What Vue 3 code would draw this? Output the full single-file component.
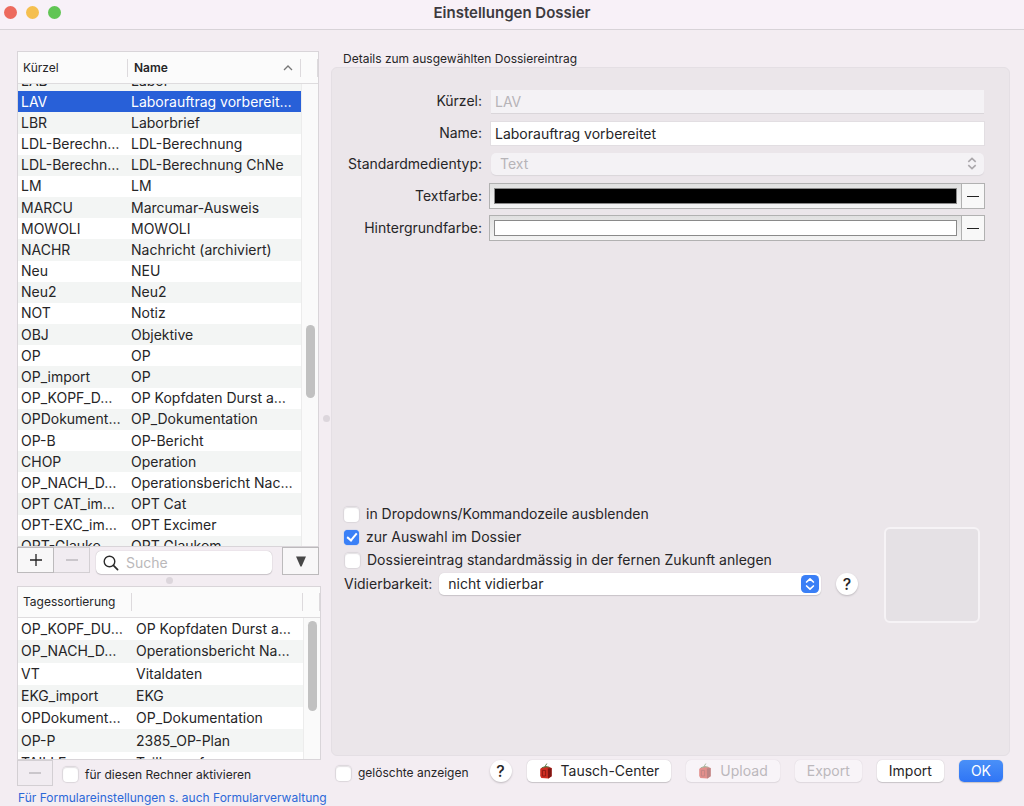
<script setup>
import { ref } from 'vue'

const entries = [
  ['LAB', 'Labor'],
  ['LAV', 'Laborauftrag vorbereit…'],
  ['LBR', 'Laborbrief'],
  ['LDL-Berechn…', 'LDL-Berechnung'],
  ['LDL-Berechn…', 'LDL-Berechnung ChNe'],
  ['LM', 'LM'],
  ['MARCU', 'Marcumar-Ausweis'],
  ['MOWOLI', 'MOWOLI'],
  ['NACHR', 'Nachricht (archiviert)'],
  ['Neu', 'NEU'],
  ['Neu2', 'Neu2'],
  ['NOT', 'Notiz'],
  ['OBJ', 'Objektive'],
  ['OP', 'OP'],
  ['OP_import', 'OP'],
  ['OP_KOPF_D…', 'OP Kopfdaten Durst a…'],
  ['OPDokument…', 'OP_Dokumentation'],
  ['OP-B', 'OP-Bericht'],
  ['CHOP', 'Operation'],
  ['OP_NACH_D…', 'Operationsbericht Nac…'],
  ['OPT CAT_im…', 'OPT Cat'],
  ['OPT-EXC_im…', 'OPT Excimer'],
  ['OPT-Glauko…', 'OPT Glaukom']
]

const dayOrder = [
  ['OP_KOPF_DU…', 'OP Kopfdaten Durst a…'],
  ['OP_NACH_D…', 'Operationsbericht Na…'],
  ['VT', 'Vitaldaten'],
  ['EKG_import', 'EKG'],
  ['OPDokument…', 'OP_Dokumentation'],
  ['OP-P', '2385_OP-Plan'],
  ['TAILLE', 'Taillenumfang']
]

const selected = ref(1)
const name = ref('Laborauftrag vorbereitet')
const search = ref('')
const hidden = ref(false)
const selectable = ref(true)
const future = ref(false)
const activeHere = ref(false)
const showDeleted = ref(false)
</script>

<template>
  <div class="window">
    <header class="titlebar">
      <div class="lights"><i class="red"></i><i class="yellow"></i><i class="green"></i></div>
      <h1>Einstellungen Dossier</h1>
    </header>

    <main class="body">
      <section class="left">
        <div class="list list-main">
          <div class="head">
            <span class="h-code">Kürzel</span>
            <span class="h-name bold">Name
              <svg width="10" height="6" viewBox="0 0 10 6"><path d="M1 5 L5 1 L9 5" fill="none" stroke="#777" stroke-width="1.3" /></svg>
            </span>
            <span class="h-end"></span>
          </div>
          <div class="view">
            <div class="clip">
              <table class="rows scrolled">
                <tbody>
                  <tr v-for="(e, i) in entries" :key="i" :class="{ sel: i === selected }" @click="selected = i">
                    <td class="c-code">{{ e[0] }}</td>
                    <td>{{ e[1] }}</td>
                  </tr>
                </tbody>
              </table>
            </div>
            <div class="track"><div class="thumb thumb-main"></div></div>
          </div>
        </div>

        <div class="tools">
          <button class="sq" aria-label="Hinzufügen">
            <svg width="14" height="14" viewBox="0 0 14 14"><path d="M7 1V13M1 7H13" stroke="#222" stroke-width="1.3" /></svg>
          </button>
          <button class="sq off" aria-label="Entfernen" disabled>
            <svg width="14" height="14" viewBox="0 0 14 14"><path d="M1 7H13" stroke="#b9b6ba" stroke-width="1.4" /></svg>
          </button>
          <label class="search">
            <svg width="16" height="16" viewBox="0 0 16 16"><circle cx="6.5" cy="6.5" r="5.3" fill="none" stroke="#2b2b2b" stroke-width="1.4" /><path d="M10.4 10.4 L14.6 14.6" stroke="#2b2b2b" stroke-width="1.7" stroke-linecap="round" /></svg>
            <input v-model="search" type="search" placeholder="Suche" aria-label="Suche" />
          </label>
          <button class="sq menu" aria-label="Menü">
            <svg width="10" height="11" viewBox="0 0 10 11"><path d="M0 0.5H10L5.6 10.5H4.4Z" fill="#474747" /></svg>
          </button>
        </div>
        <div class="split-h"><i class="dot"></i></div>

        <div class="list list-day">
          <div class="head">
            <span class="h-code">Tagessortierung</span>
            <span class="h-name"></span>
            <span class="h-end"></span>
          </div>
          <div class="view">
            <div class="clip">
              <table class="rows">
                <tbody>
                  <tr v-for="(e, i) in dayOrder" :key="i">
                    <td class="c-code">{{ e[0] }}</td>
                    <td>{{ e[1] }}</td>
                  </tr>
                </tbody>
              </table>
            </div>
            <div class="track"><div class="thumb thumb-day"></div></div>
          </div>
        </div>

        <div class="under">
          <button class="sq off" aria-label="Entfernen" disabled>
            <svg width="12" height="12" viewBox="0 0 12 12"><path d="M0 6H12" stroke="#b9b6ba" stroke-width="1.4" /></svg>
          </button>
          <label class="check small"><input v-model="activeHere" type="checkbox" />für diesen Rechner aktivieren</label>
        </div>
        <a class="link" href="#">Für Formulareinstellungen s. auch Formularverwaltung</a>
      </section>

      <div class="split-v"><i class="dot"></i></div>

      <section class="right">
        <h2>Details zum ausgewählten Dossiereintrag</h2>
        <div class="panel">
          <div class="form">
            <label for="code">Kürzel:</label>
            <div class="field"><input id="code" class="text" value="LAV" disabled /></div>
            <label for="name">Name:</label>
            <div class="field"><input id="name" v-model="name" class="text" /></div>
            <label for="media">Standardmedientyp:</label>
            <div class="field">
              <div class="pick pick-off">
                <select id="media" disabled><option>Text</option></select>
                <svg width="10" height="13" viewBox="0 0 10 13"><path d="M1.3 4.8 L5 1.4 L8.7 4.8 M1.3 8.2 L5 11.6 L8.7 8.2" fill="none" stroke="#aaa7ab" stroke-width="1.6" /></svg>
              </div>
            </div>
            <label for="fg">Textfarbe:</label>
            <div class="color">
              <button id="fg" class="well"><i class="black"></i></button>
              <button class="minus" aria-label="Textfarbe entfernen"><i></i></button>
            </div>
            <label for="bg">Hintergrundfarbe:</label>
            <div class="color">
              <button id="bg" class="well"><i class="white"></i></button>
              <button class="minus" aria-label="Hintergrundfarbe entfernen"><i></i></button>
            </div>
          </div>

          <div class="lower">
            <div class="options">
              <label class="check"><input v-model="hidden" type="checkbox" />in Dropdowns/Kommandozeile ausblenden</label>
              <label class="check"><input v-model="selectable" type="checkbox" />zur Auswahl im Dossier</label>
              <label class="check inset"><input v-model="future" type="checkbox" />Dossiereintrag standardmässig in der fernen Zukunft anlegen</label>
              <div class="vid">
                <label for="vid">Vidierbarkeit:</label>
                <div class="pick">
                  <select id="vid"><option>nicht vidierbar</option></select>
                  <svg width="18" height="18" viewBox="0 0 18 18"><rect width="18" height="18" rx="4.5" fill="#3a7ff6" /><path d="M5.6 7 L9 3.8 L12.4 7 M5.6 11 L9 14.2 L12.4 11" fill="none" stroke="#fff" stroke-width="1.7" stroke-linecap="round" stroke-linejoin="round" /></svg>
                </div>
                <button class="help">?</button>
              </div>
            </div>
            <div class="image-well"></div>
          </div>
        </div>

        <footer class="actions">
          <label class="check small"><input v-model="showDeleted" type="checkbox" />gelöschte anzeigen</label>
          <button class="help">?</button>
          <button v-for="b in ['Tausch-Center', 'Upload']" :key="b" class="btn" :disabled="b === 'Upload'">
            <svg class="fruit" width="14" height="16" viewBox="0 0 14 16">
              <path d="M2 5 L5 4 L10 3.8 L12.6 5 L12.6 13.2 L9.6 15.4 L2.4 15 L1.2 13 L1.2 6.4Z" fill="#cf2d22" />
              <path d="M8.8 5.6 L12.6 5 L12.6 13.2 L9 15.4Z" fill="#7f1613" />
              <path d="M3.4 7.4 H6.6 V13 H3.4Z" fill="none" stroke="#8a1713" stroke-width="0.9" />
              <path d="M6.4 4.8 C6.2 2.8 6.8 1.4 8.2 0.6 M3 4.8 L6.6 3.4 L10.4 4.4" fill="none" stroke="#54743f" stroke-width="1" />
            </svg>
            {{ b }}
          </button>
          <button class="btn" disabled>Export</button>
          <button class="btn">Import</button>
          <button class="btn primary">OK</button>
        </footer>
      </section>
    </main>
  </div>
</template>

<style>
body { margin: 0; background: #f3edf2; }
</style>

<style scoped>
* { box-sizing: border-box; }
.window {
  display: flex; flex-direction: column; height: 100vh; min-height: 640px;
  background: #f3edf2; color: #262527;
  font-family: Inter, "Liberation Sans", sans-serif; font-size: 14px; line-height: 20px;
}
button, input, select { font: inherit; color: inherit; margin: 0; }
button { padding: 0; }
.titlebar {
  flex: none; height: 30px; display: flex; align-items: center; padding: 0 4px 4px;
  border-bottom: 1px solid #d8d3d8; background: #f8f1f8;
}
.lights { display: flex; gap: 9px; flex: 1; }
.lights i { width: 13px; height: 13px; border-radius: 50%; }
.red { background: #ed6a5e; }
.yellow { background: #f5bf4f; }
.green { background: #61c554; }
h1 { margin: 0; font-size: 15px; line-height: 20px; font-weight: 600; color: #3d3a3e; }
.titlebar::after { content: ""; flex: 1; }

.body { flex: 1; min-height: 0; display: flex; padding: 21px 14px 0 17px; }
.left { flex: none; width: 304px; display: flex; flex-direction: column; }

.list { display: flex; flex-direction: column; border: 1px solid #d9d5d9; background: #fff; min-height: 0; }
.list-main { flex: 1; width: 302px; }
.list-day { flex: none; height: 174px; }
.head { flex: none; display: flex; align-items: center; height: 32px; font-size: 12px; border-bottom: 1px solid #dedcde; background: #fbfbfb; }
.head span { height: 18px; line-height: 18px; border-right: 1px solid #dddadd; padding-left: 6px; }
.head .h-code { width: 110px; padding-left: 5px; }
.h-name { flex: 1; display: flex; align-items: center; justify-content: space-between; padding-right: 7px; }
.bold { font-weight: 600; }
.h-end { width: 17px; }
.list-day .h-code { width: 114px; }
.list-day .head { height: 31px; }
.view { flex: 1; min-height: 0; display: flex; }
.clip { flex: 1; overflow: hidden; }
.rows { width: 100%; height: calc(100% + 15px); border-collapse: collapse; table-layout: fixed; }
.rows td { height: 22px; padding: 0 0 0 3px; white-space: nowrap; overflow: hidden; line-height: 20px; }
.rows tr:nth-child(even) { background: #f3f5f4; }
.rows .c-code { width: 110px; }
.list-day .c-code { width: 115px; }
.scrolled { margin-top: -14px; height: calc(100% + 25px); }
.scrolled td { height: 21px; }
.scrolled tr:nth-child(odd) { background: #f3f5f4; }
.scrolled tr:nth-child(even) { background: #fff; }
.rows tr.sel { background: #2860d8; color: #fff; }
.track { flex: none; width: 17px; border-left: 1px solid #ececec; background: #fafafa; display: flex; flex-direction: column; align-items: center; }
.thumb { width: 9px; border-radius: 5px; background: #c1c1c1; }
.thumb-main { margin-top: 241px; height: 73px; }
.thumb-day { margin-top: 3px; height: 90px; }

.tools { flex: none; display: flex; align-items: flex-start; width: 302px; height: 28px; }
.sq { flex: none; width: 37px; height: 26px; display: grid; place-items: center; border: 1px solid #bcbabc; background: #f8f7f8; }
.sq.off { width: 36px; border-color: #d3cfd3; background: #f1ecf1; }
.tools .off { border-left: 0; }
.search {
  flex: 1; min-width: 0; display: flex; align-items: center; gap: 7px; height: 23px; margin: 4px 10px 0 6px; padding: 0 7px;
  border-radius: 5px; background: #fff; box-shadow: 0 0 1px #aaa5aa, 0 1px 1px #cbc6cb;
}
.search svg { flex: none; }
.search input { flex: 1; min-width: 0; border: 0; padding: 0; background: none; outline: none; }
.search input::placeholder { color: #bab8ba; opacity: 1; }
.sq.menu { height: 28px; }
.split-h { flex: none; height: 11px; display: grid; place-items: center; }
.dot { width: 7px; height: 7px; border-radius: 50%; background: #dcd6dc; }

.under { flex: none; display: flex; align-items: center; gap: 10px; height: 26px; }
.under .check { padding-top: 3px; }
.link { flex: none; margin: 4px 0 0 1px; height: 16px; font-size: 12px; line-height: 16px; color: #2c68d8; text-decoration: none; white-space: nowrap; }

.check { display: flex; align-items: center; gap: 7px; }
.check input {
  appearance: none; flex: none; width: 15px; height: 15px; border-radius: 4px; background: #fff;
  box-shadow: 0 0 1px 1px #dbd6db, inset 0 1px 1px #e4e1e4; display: grid; place-items: center;
}
.check input:checked { background: #3a80f7; box-shadow: 0 0 1px #3a80f7; }
.check input:checked::after { content: ""; width: 4px; height: 8px; border: solid #fff; border-width: 0 2px 2px 0; transform: rotate(40deg); margin-bottom: 2px; }
.small { font-size: 12px; }

.split-v { flex: none; width: 10px; padding-bottom: 20px; display: grid; place-items: center; }
.right { flex: 1; min-width: 0; display: flex; flex-direction: column; }
h2 { margin: 0 0 0 12px; font-size: 12px; line-height: 16px; font-weight: 400; }
.panel {
  flex: 1; min-height: 0; display: flex; flex-direction: column; justify-content: space-between;
  border: 1px solid #e4dfe4; border-radius: 6px; background: #ebe6ea; padding: 18px 24px 132px 12px;
}
.form { display: grid; grid-template-columns: 138px 1fr; grid-template-rows: 30px 34px 28px 36px 28px; column-gap: 7px; align-items: center; }
.form > label { text-align: right; white-space: nowrap; }
.field { display: grid; padding: 0 1px 0 2px; }
.text { width: 100%; height: 23px; border: 0; border-radius: 0; padding: 0 4px; background: #fff; outline: none; box-shadow: 0 0 0 1px #e2dee2, 0 1px 0 #c4c0c4; }
.text:disabled { background: #f4f2f5; color: #b7b4b8; box-shadow: 0 1px 0 #dad6da; }
.pick { position: relative; display: flex; height: 22px; border-radius: 5px; background: #fff; box-shadow: 0 1px 1px #c8c4c8, 0 0 1px #c8c4c8; }
.pick select { appearance: none; flex: 1; border: 0; padding: 0 9px; background: none; outline: none; line-height: 20px; }
.pick svg { position: absolute; right: 2px; top: 2px; pointer-events: none; }
.pick-off { background: #f4f2f5; box-shadow: 0 1px 1px #dad6da; }
.pick-off select { color: #b7b4b8; opacity: 1; }
.pick-off svg { right: 7px; top: 4px; }
.color { display: flex; height: 26px; border: 1px solid #b1b1b1; }
.well { flex: 1; display: flex; padding: 4px; border: 0; background: linear-gradient(#e0e0e0, #f4f4f4); }
.well i { flex: 1; align-self: stretch; border: 1px solid #8a8a8a; }
.black { background: #000; }
.white { background: #fff; }
.minus { width: 23px; border: 0; border-left: 1px solid #b1b1b1; background: #f8f8f8; display: grid; place-items: center; }
.minus i { width: 12px; height: 1px; background: #222; }

.lower { display: flex; align-items: flex-end; justify-content: space-between; }
.options { display: flex; flex-direction: column; gap: 3px; padding-bottom: 28px; flex: 1; }
.inset { padding-left: 1px; }
.vid { display: flex; align-items: center; }
.vid .pick { flex: 1; margin: 0 15px 0 7px; }
.help { flex: none; width: 22px; height: 22px; border: 0; border-radius: 50%; background: #fff; font-size: 16px; font-weight: 500; box-shadow: 0 1px 2px #bdb8bd; }
.image-well { flex: none; width: 96px; height: 96px; margin: 0 5px 0 26px; border: 2px solid #f6f3f6; border-radius: 6px; background: #e5e1e5; }

.actions { flex: none; height: 50px; display: flex; align-items: flex-start; padding: 4px 4px 0 5px; }
.actions .check { margin-top: 3px; }
.actions .help { margin-left: 21px; }
.btn { height: 22px; padding: 0 12px; margin-left: 15px; border: 0; border-radius: 5px; background: #fff; display: flex; align-items: center; gap: 8px; white-space: nowrap; box-shadow: 0 0 1px #bbb6bb, 0 1px 1px #cac5ca; }
.btn:disabled { background: #f8f4f8; color: #bcb8bc; box-shadow: 0 0 1px #cfcacf, 0 1px 1px #dfdadf; }
.btn:disabled .fruit { opacity: 0.5; }
.primary { background: linear-gradient(#4a90f8, #2f75f5); color: #fff; }
</style>
